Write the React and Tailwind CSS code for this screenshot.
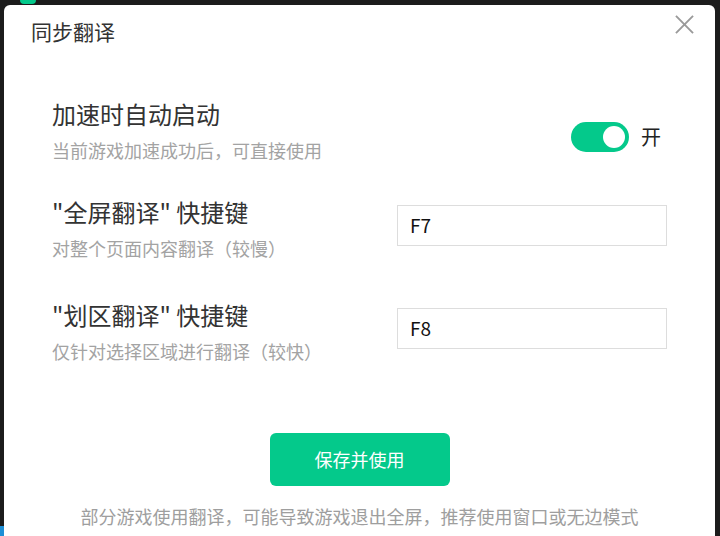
import React from "react";

const font = { fontFamily: '"Microsoft YaHei", "Noto Sans CJK SC", "Noto Sans", sans-serif' };

function Row({ title, sub, children, className = "" }) {
  return (
    <div className={"flex justify-between " + className}>
      <div className="flex flex-col">
        <div className="text-[24px] leading-[32px] text-[#333333]">{title}</div>
        <div className="mt-[7px] text-[18px] leading-[26px] text-[#a3a3a3]">{sub}</div>
      </div>
      {children}
    </div>
  );
}

export default function App() {
  return (
    <div
      className="relative w-[720px] h-[536px] bg-[#1c1c1c] overflow-hidden flex flex-col pt-[5px] pl-[4px] pr-[5px]"
      style={font}
    >
      <div className="absolute left-[20px] top-0 w-[16px] h-[4px] bg-[#04c98b] rounded-b-sm" />
      <div className="absolute left-0 bottom-0 w-[4px] h-[10px] bg-[#1d8fd6]" />
      <div className="relative flex-1 bg-white rounded-t-[6px] flex flex-col">
        <div className="flex items-start justify-between h-[56px] pl-[27px] pr-[21px]">
          <div className="mt-[12px] text-[21px] leading-[28px] text-[#333333]">同步翻译</div>
          <svg width="19" height="19" viewBox="0 0 20 20" className="mt-[10px]">
            <path d="M1 1 L19 19 M19 1 L1 19" stroke="#9a9a9a" strokeWidth="2" fill="none" />
          </svg>
        </div>

        <div className="flex flex-col px-[48px] mt-[37px]">
          <Row title="加速时自动启动" sub="当前游戏加速成功后，可直接使用">
            <div className="flex items-center mt-[24px] h-[30px] mr-[6px]">
              <div className="w-[58px] h-[30px] rounded-full bg-[#04c98b] flex items-center justify-end pr-[4px]">
                <div className="w-[22px] h-[22px] rounded-full bg-white" />
              </div>
              <span className="ml-[12px] text-[20px] leading-[28px] text-[#222222]">开</span>
            </div>
          </Row>

          <Row title={'"全屏翻译" 快捷键'} sub="对整个页面内容翻译（较慢）" className="mt-[33px]">
            <div className="mt-[9px] w-[270px] h-[41px] border border-[#dddddd] flex items-center pl-[12px] text-[19px] text-[#111111]">
              F7
            </div>
          </Row>

          <Row title={'"划区翻译" 快捷键'} sub="仅针对选择区域进行翻译（较快）" className="mt-[38px]">
            <div className="mt-[9px] w-[270px] h-[41px] border border-[#dddddd] flex items-center pl-[12px] text-[19px] text-[#111111]">
              F8
            </div>
          </Row>
        </div>

        <div className="flex justify-center mt-[69px]">
          <button className="w-[180px] h-[53px] rounded-[6px] bg-[#04c98b] text-white text-[18px]">
            保存并使用
          </button>
        </div>

        <div className="text-center mt-[17px] text-[18px] leading-[26px] text-[#9e9e9e]">
          部分游戏使用翻译，可能导致游戏退出全屏，推荐使用窗口或无边模式
        </div>
      </div>
    </div>
  );
}
